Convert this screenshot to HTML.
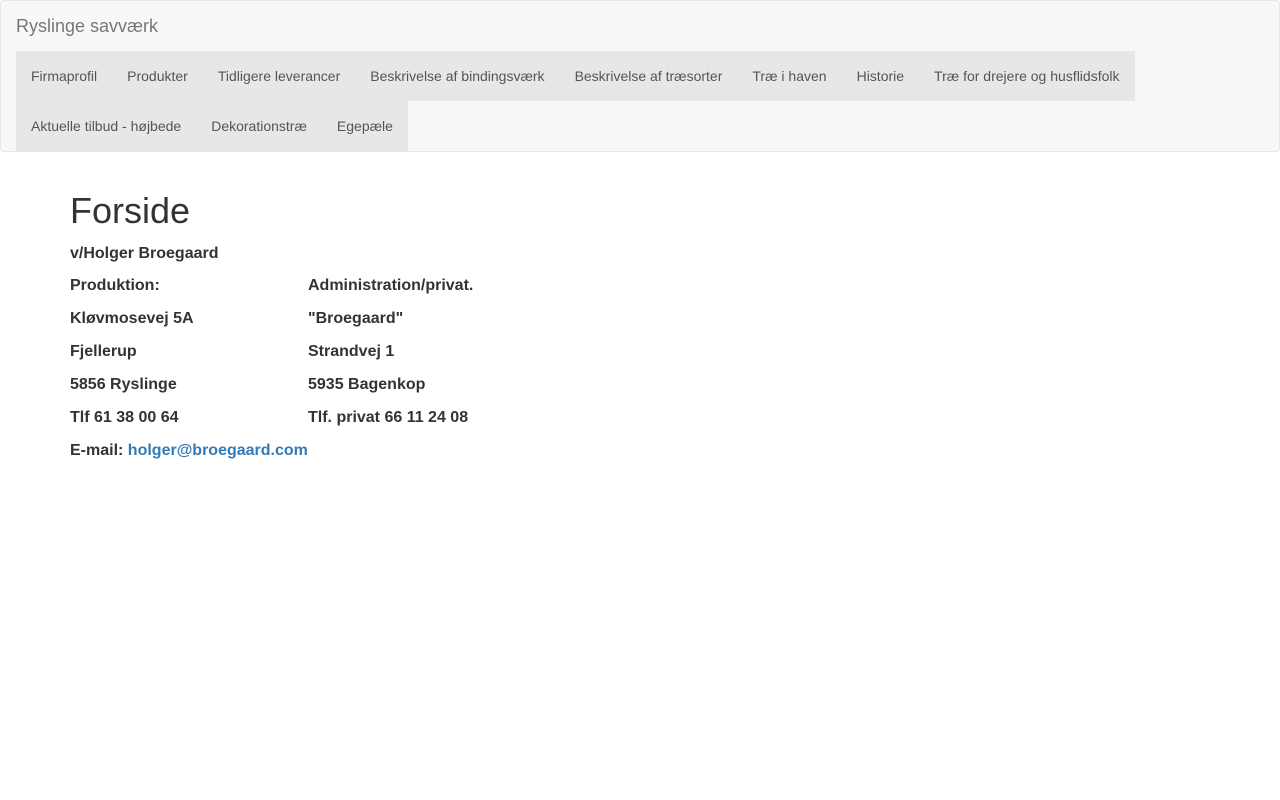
<!DOCTYPE html>
<html><head><meta charset="utf-8"><style>
*{box-sizing:border-box}
body{margin:0;font-family:"Liberation Sans",Arial,sans-serif;color:#333;background:#fff}
.nav{position:absolute;left:0;top:0;width:1280px;height:152px;background:#f8f8f8;border:1px solid #e7e7e7;border-radius:4px}
.brand{position:absolute;left:15px;top:15px;font-size:18px;color:#777;line-height:20px}
.items{position:absolute;left:15px;top:50px;width:1125px}
.items a{float:left;height:50px;line-height:50px;padding:0 15px;background:#e7e7e7;color:#555;font-size:14px;text-decoration:none}
.c{position:absolute;left:70px;top:187px}
h1{font-size:36px;font-weight:500;margin:0 0 9px;line-height:48px}
p{margin:0;font-weight:bold;font-size:16px;line-height:20px;height:33px}
.r span{display:inline-block;width:238px}
a.m{color:#337ab7;text-decoration:none}
</style></head><body>
<div class="nav"><div class="brand">Ryslinge savværk</div>
<div class="items"><a>Firmaprofil</a><a>Produkter</a><a>Tidligere leverancer</a><a>Beskrivelse af bindingsværk</a><a>Beskrivelse af træsorter</a><a>Træ i haven</a><a>Historie</a><a>Træ for drejere og husflidsfolk</a><a>Aktuelle tilbud - højbede</a><a>Dekorationstræ</a><a>Egepæle</a></div></div>
<div class="c">
<h1>Forside</h1>
<p style="height:32px">v/Holger Broegaard</p>
<p class="r"><span>Produktion:</span>Administration/privat.</p>
<p class="r"><span>Kløvmosevej 5A</span>"Broegaard"</p>
<p class="r"><span>Fjellerup</span>Strandvej 1</p>
<p class="r"><span>5856 Ryslinge</span>5935 Bagenkop</p>
<p class="r"><span>Tlf 61 38 00 64</span>Tlf. privat 66 11 24 08</p>
<p>E-mail: <a class="m">holger@broegaard.com</a></p>
</div>
</body></html>
